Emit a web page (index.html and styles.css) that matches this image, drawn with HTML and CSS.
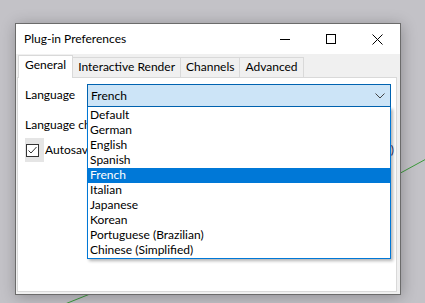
FILE: index.html
```html
<!DOCTYPE html>
<html lang="en">
<head>
  <meta charset="UTF-8">
  <title>Plug-in Preferences</title>
  <link rel="stylesheet" href="styles.css">
</head>
<body>
  <svg class="scene" width="425" height="303">
    <line x1="60" y1="306" x2="100" y2="290" stroke="#3c9a3c" stroke-width="1"/>
    <line x1="395" y1="176" x2="428" y2="158" stroke="#3c9a3c" stroke-width="1"/>
  </svg>

  <div class="window">
    <div class="titlebar">
      <p class="title">Plug-in Preferences</p>
      <div class="controls">
        <div class="ctl">
          <svg width="10" height="10"><line x1="0" y1="5.5" x2="10" y2="5.5" stroke="#000"/></svg>
        </div>
        <div class="ctl">
          <svg width="10" height="10"><rect x="0.5" y="0.5" width="9" height="9" fill="none" stroke="#000"/></svg>
        </div>
        <div class="ctl">
          <svg width="11" height="11"><path d="M0.5 0.5 L10.5 10.5 M10.5 0.5 L0.5 10.5" stroke="#000"/></svg>
        </div>
      </div>
    </div>

    <div class="dialog">
      <div class="tabs">
        <div class="tab active">General</div>
        <div class="tab">Interactive Render</div>
        <div class="tab">Channels</div>
        <div class="tab">Advanced</div>
      </div>

      <div class="pane">
        <div class="row">
          <span class="label">Language</span>
          <div class="combo-wrap">
            <div class="combo">
              <span>French</span>
              <svg width="10" height="6"><polyline points="0.5,0.5 5,5 9.5,0.5" fill="none" stroke="#444"/></svg>
            </div>
            <ul class="list">
              <li>Default</li>
              <li>German</li>
              <li>English</li>
              <li>Spanish</li>
              <li class="selected">French</li>
              <li>Italian</li>
              <li>Japanese</li>
              <li>Korean</li>
              <li>Portuguese (Brazilian)</li>
              <li>Chinese (Simplified)</li>
            </ul>
          </div>
        </div>

        <div class="row note">Language changes</div>

        <div class="row check-row">
          <div class="check-area">
            <svg width="13" height="13"><rect x="0.5" y="0.5" width="12" height="12" fill="#fff" stroke="#333"/><polyline points="2.5,6.5 5,9 10.5,3" fill="none" stroke="#333"/></svg>
          </div>
          <span class="check-label">Autosave</span>
          <span class="tail">)</span>
        </div>
      </div>
    </div>
  </div>
</body>
</html>
```

FILE: styles.css
```css
body {
  margin: 0;
  width: 425px;
  height: 303px;
  overflow: hidden;
  background-color: #c3c2c7;
  font-family: Lato, "Noto Sans", sans-serif;
  font-size: 12px;
  color: #000;
  position: relative;
}
.scene {
  position: absolute;
  left: 0;
  top: 0;
}
.window {
  position: relative;
  margin: 23px 0 0 15px;
  width: 384px;
  height: 270px;
  border: 1px solid #6b6b6b;
  background-color: #f0f0f0;
  box-shadow: 1px 2px 14px rgba(0, 0, 0, 0.28);
  display: flex;
  flex-direction: column;
}
.titlebar {
  height: 30px;
  background-color: #ffffff;
  display: flex;
  align-items: center;
  justify-content: space-between;
}
.title {
  margin: 0 0 0 8px;
  padding-bottom: 1px;
}
.controls {
  display: flex;
  height: 100%;
}
.ctl {
  width: 46px;
  display: flex;
  align-items: center;
  justify-content: center;
}
.ctl svg {
  display: block;
}
.dialog {
  flex: 1;
  display: flex;
  flex-direction: column;
  padding: 0 3px 2px 1px;
}
.tabs {
  display: flex;
  align-items: flex-end;
  height: 23px;
  padding-left: 1px;
}
.tab {
  height: 19px;
  line-height: 17px;
  padding: 0 5px;
  border: 1px solid #d9d9d9;
  border-bottom: none;
  border-left: none;
  background-color: #f0f0f0;
}
.tab.active {
  height: 22px;
  line-height: 18px;
  padding: 0 6px;
  border-left: 1px solid #d9d9d9;
  background-color: #ffffff;
  position: relative;
  z-index: 1;
  margin-bottom: -1px;
}
.pane {
  flex: 1;
  background-color: #ffffff;
  border: 1px solid #d9d9d9;
  padding: 6px 5px 0 7px;
}
.row {
  display: flex;
  align-items: center;
  height: 23px;
}
.label {
  width: 62px;
  padding-bottom: 2px;
}
.combo-wrap {
  flex: 1;
  position: relative;
}
.combo {
  height: 21px;
  border: 1px solid #0063b1;
  background-color: #cce4f7;
  padding: 0 5px 0 3px;
  display: flex;
  align-items: center;
  justify-content: space-between;
}
.combo span {
  padding-bottom: 1px;
}
.combo svg {
  display: block;
}
.list {
  position: absolute;
  left: 0;
  right: 0;
  top: 100%;
  margin: 0;
  padding: 1px 0 0 0;
  list-style: none;
  background-color: #ffffff;
  border: 1px solid #0078d7;
  border-top: none;
  box-shadow: 2px 2px 3px rgba(0, 0, 0, 0.3);
  z-index: 5;
}
.list li {
  height: 15px;
  line-height: 14px;
  padding-left: 2px;
}
.list li.selected {
  background-color: #0078d7;
  color: #ffffff;
}
.note {
  margin-top: 7px;
  height: 21px;
}
.check-row {
  margin-top: 3px;
  height: 24px;
}
.check-area {
  width: 18px;
  height: 24px;
  background-color: #e5e5e5;
  display: flex;
  align-items: center;
  padding-left: 1px;
  margin-right: 1px;
}
.check-area svg {
  display: block;
}
.check-label {
  flex: 1;
  padding-bottom: 2px;
}
.tail {
  color: #1a2a6e;
  margin-right: -3px;
  padding-bottom: 2px;
}
```
